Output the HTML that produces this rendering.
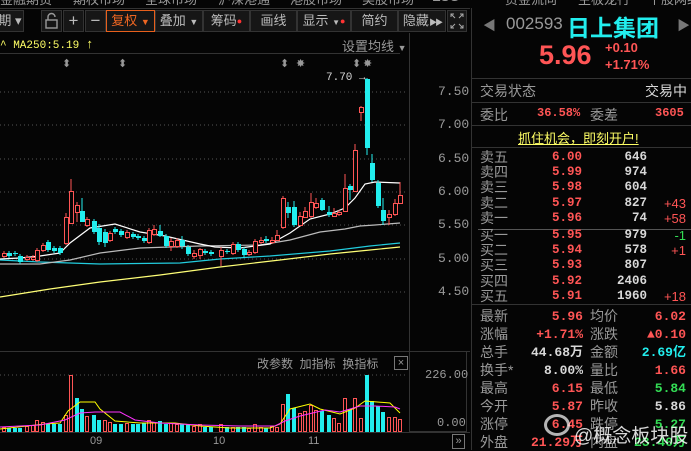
<!DOCTYPE html>
<html><head><meta charset="utf-8"><style>
*{margin:0;padding:0;box-sizing:border-box}
body{width:691px;height:450px;background:#050505;overflow:hidden;position:relative;font-family:"Liberation Sans","Noto Sans CJK SC",sans-serif;color:#ccc}
.a{position:absolute;white-space:nowrap}
.btn{position:absolute;top:10px;height:22px;background:#161616;border:1px solid #333;color:#bbb;font-size:13px;line-height:20px;text-align:center;white-space:nowrap;overflow:hidden}
.r{color:#ff5555}.g{color:#33dd55}.c{color:#22eeee}.w{color:#d8d8d8}.gr{color:#999}.y{color:#ffff66}
.mono{font-family:"Liberation Mono","Noto Sans CJK SC",monospace;font-weight:bold}
</style></head><body>
<div class="a gr" style="top:-11px;left:0;font-size:13px">
<span style="position:absolute;left:0">金融期货</span><span style="position:absolute;left:73px">期权市场</span><span style="position:absolute;left:145px">全球市场</span><span style="position:absolute;left:218px">沪深港通</span><span style="position:absolute;left:290px">港股市场</span><span style="position:absolute;left:362px">美股市场</span><span style="position:absolute;left:432px">ESG</span><span style="position:absolute;left:505px">资金流向</span><span style="position:absolute;left:578px">主板龙行</span><span style="position:absolute;left:648px">个股网络</span></div>
<div class="a" style="top:8px;left:0;width:470px;height:1px;background:#333"></div>
<div class="btn" style="left:-4px;width:28px">期 ▾</div>
<div class="btn" style="left:41px;width:21px">
<svg width="19" height="20" viewBox="0 0 19 20"><rect x="4" y="9" width="11" height="8" fill="none" stroke="#999" stroke-width="1.4"/><path d="M6 9V6a3.5 3.5 0 0 1 7 0" fill="none" stroke="#999" stroke-width="1.4"/></svg></div>
<div class="btn" style="left:63px;width:21px;font-size:17px">+</div>
<div class="btn" style="left:85px;width:21px;font-size:17px">−</div>
<div class="btn" style="left:106px;width:49px;border-color:#e8601c;color:#ee6622">复权 <span style="font-size:9px">▼</span></div>
<div class="btn" style="left:155px;width:48px">叠加 <span style="font-size:9px">▼</span></div>
<div class="btn" style="left:203px;width:47px">筹码<span style="color:#f33;font-size:9px;vertical-align:top">●</span></div>
<div class="btn" style="left:250px;width:47px">画线</div>
<div class="btn" style="left:297px;width:54px">显示 <span style="font-size:8px">▼</span><span style="color:#f33;font-size:9px;vertical-align:top">●</span></div>
<div class="btn" style="left:351px;width:47px">简约</div>
<div class="btn" style="left:398px;width:48px">隐藏<span style="font-size:8px;letter-spacing:-2px"> ▶▶</span></div>
<div class="btn" style="left:447px;width:20px"><svg width="18" height="20" viewBox="0 0 18 20"><path d="M3 6V3h3M12 3h3v3M15 14v3h-3M6 17H3v-3M3 3l4 4M15 3l-4 4M15 17l-4-4M3 17l4-4" fill="none" stroke="#aaa" stroke-width="1"/></svg></div>
<div class="a y" style="left:0;top:37px;font-size:11px;font-family:'Liberation Mono',monospace">^ MA250:5.19 <span style="font-size:13px">↑</span></div>
<div class="a gr" style="left:342px;top:36px;font-size:13px">设置均线 <span style="font-size:9px">▼</span></div>
<div class="a" style="left:0;top:53px;width:400px;height:1px;background:#333"></div>
<div class="a" style="left:409px;top:33px;width:1px;height:400px;background:#333"></div>
<div class="a" style="left:0;top:351px;width:470px;height:1px;background:#333"></div>
<div class="a" style="left:409px;top:352px;width:58px;height:80px;border:1px solid #333;border-top:none"></div>
<div class="a" style="left:0;top:432px;width:470px;height:1px;background:#333"></div>
<div class="a gr" style="left:438px;top:85px;font-size:13px;font-family:'Liberation Mono',monospace;line-height:14px">7.50</div>
<div class="a gr" style="left:438px;top:118px;font-size:13px;font-family:'Liberation Mono',monospace;line-height:14px">7.00</div>
<div class="a gr" style="left:438px;top:152px;font-size:13px;font-family:'Liberation Mono',monospace;line-height:14px">6.50</div>
<div class="a gr" style="left:438px;top:185px;font-size:13px;font-family:'Liberation Mono',monospace;line-height:14px">6.00</div>
<div class="a gr" style="left:438px;top:218px;font-size:13px;font-family:'Liberation Mono',monospace;line-height:14px">5.50</div>
<div class="a gr" style="left:438px;top:252px;font-size:13px;font-family:'Liberation Mono',monospace;line-height:14px">5.00</div>
<div class="a gr" style="left:438px;top:285px;font-size:13px;font-family:'Liberation Mono',monospace;line-height:14px">4.50</div>
<div class="a gr" style="left:425px;top:368px;font-size:12px;font-family:'Liberation Mono',monospace">226.00</div>
<div class="a gr" style="left:437px;top:416px;font-size:12px;font-family:'Liberation Mono',monospace">0.00</div>
<div class="a gr" style="left:90px;top:435px;font-size:11px">09</div>
<div class="a gr" style="left:213px;top:435px;font-size:11px">10</div>
<div class="a gr" style="left:308px;top:435px;font-size:11px">11</div>
<div class="a gr" style="left:452px;top:434px;width:13px;height:15px;border:1px solid #777;font-size:11px;line-height:13px;text-align:center">»</div>
<div class="a gr" style="left:257px;top:355px;font-size:12px">改参数 &nbsp;加指标 &nbsp;换指标</div>
<div class="a gr" style="left:394px;top:356px;width:14px;height:14px;border:1px solid #777;font-size:11px;line-height:12px;text-align:center">×</div>
<div class="a gr" style="left:62px;top:57px;font-size:11px">⬍</div>
<div class="a gr" style="left:118px;top:57px;font-size:11px">⬍</div>
<div class="a gr" style="left:280px;top:57px;font-size:11px">⬍</div>
<div class="a gr" style="left:296px;top:57px;font-size:11px">✸</div>
<div class="a gr" style="left:352px;top:57px;font-size:11px">⬍</div>
<div class="a gr" style="left:363px;top:57px;font-size:11px">✸</div>
<div class="a w" style="left:326px;top:72px;font-size:11px;font-family:'Liberation Mono',monospace">7.70 →</div>
<svg class="a" style="left:0;top:0" width="410" height="450">
<g stroke="#555" stroke-dasharray="1,3" stroke-width="1">
<line x1="0" y1="92" x2="408" y2="92"/><line x1="0" y1="125" x2="408" y2="125"/><line x1="0" y1="159" x2="408" y2="159"/><line x1="0" y1="192" x2="408" y2="192"/><line x1="0" y1="225" x2="408" y2="225"/><line x1="0" y1="259" x2="408" y2="259"/><line x1="0" y1="292" x2="408" y2="292"/><line x1="0" y1="375" x2="408" y2="375"/>
</g>
<g fill="none" stroke-width="1.2">
<polyline stroke="#ffff77" points="0,297 50,289 100,282 160,275 220,267 280,260 330,254 370,250 400,247"/>
<polyline stroke="#22ccdd" points="0,260 40,262 100,264 180,263 220,259 270,256 330,251 370,246 400,243"/>
<polyline stroke="#bbbbbb" points="0,264 40,264 70,260 100,253 140,248 200,246 260,245 290,240 320,232 345,229 360,226 375,225 400,223"/>
<polyline stroke="#ffffff" points="0,259 20,258 40,256 60,253 70,243 90,228 115,224 140,232 165,236 200,244 215,247 240,248 270,244 290,233 310,219 330,214 345,208 355,198 365,184 375,182 400,183"/>
</g>
<g id="k"></g>
<g id="v"></g>
<g fill="none" stroke-width="1">
<polyline stroke="#ffff00" points="0,429 45,424 60,423 68,411 80,402 95,402 100,409 115,421 140,423 175,423 200,426 230,428 270,428 280,424 290,409 310,404 320,409 340,414 355,408 365,401 390,403 400,413"/>
<polyline stroke="#ff33ff" points="0,427 40,425 65,420 80,413 95,412 120,412 135,420 160,423 200,425 240,426 275,426 285,421 300,416 325,410 340,412 360,406 375,406 395,407 400,409"/>
</g>
</svg>
<div class="a" style="left:471px;top:8px;width:1px;height:442px;background:#333"></div>
<div class="a" style="left:483px;top:15px;font-size:13px;color:#777">◀</div>
<div class="a" style="left:677px;top:15px;font-size:13px;color:#777">▶</div>
<div class="a gr" style="left:506px;top:14px;font-size:17px">002593</div>
<div class="a c" style="left:567px;top:9px;font-size:23px;font-weight:bold">日上集团</div>
<div class="a r" style="left:539px;top:40px;font-size:27px;font-weight:bold">5.96</div>
<div class="a r" style="left:605px;top:40px;font-size:13px;font-weight:bold">+0.10</div>
<div class="a r" style="left:605px;top:57px;font-size:13px;font-weight:bold">+1.71%</div>
<div class="a" style="left:472px;top:78px;width:219px;height:1px;background:#333"></div>
<div class="a gr" style="left:480px;top:81px;font-size:14px">交易状态</div>
<div class="a w" style="left:645px;top:81px;font-size:14px">交易中</div>
<div class="a" style="left:472px;top:102px;width:219px;height:1px;background:#333"></div>
<div class="a gr" style="left:480px;top:105px;font-size:14px">委比</div>
<div class="a r mono" style="left:537px;top:106px;font-size:12px">36.58%</div>
<div class="a gr" style="left:590px;top:105px;font-size:14px">委差</div>
<div class="a r mono" style="left:655px;top:106px;font-size:12px">3605</div>
<div class="a" style="left:472px;top:125px;width:219px;height:1px;background:#333"></div>
<div class="a y" style="left:518px;top:128px;font-size:13px;text-decoration:underline">抓住机会，即刻开户!</div>
<div class="a" style="left:472px;top:147px;width:219px;height:1px;background:#333"></div>
<div class="a" style="left:478px;top:229px;width:213px;height:1px;background:#555"></div>
<div class="a" style="left:472px;top:304px;width:219px;height:1px;background:#333"></div>
<div id="ob"></div>
<div class="a" style="left:544px;top:414px;width:26px;height:22px;border-radius:50%;border:3px solid rgba(255,255,255,.7)"></div>
<div class="a" style="left:574px;top:421px;font-size:19px;color:rgba(255,255,255,.85)">@概念板块股</div>
<script>
var K=[[4,253,256,'r'],[9,253,256,'c'],[15,253,254,'c'],[20,256,262,'c'],[27,257,259,'r'],[33,257,259,'r'],[37,250,260,'r'],[43,245,250,'r'],[48,242,250,'c'],[54,248,251,'c'],[60,248,253,'c'],[66,217,243,'r',213,245],[71,191,223,'r',179,223],[77,205,212,'r',202,222],[82,211,222,'c',198,222],[87,219,225,'r'],[94,221,232,'c'],[99,228,242,'c',224,245],[105,232,243,'c',229,247],[110,233,240,'r'],[115,229,232,'c'],[121,231,235,'c'],[127,232,237,'r'],[133,234,237,'c'],[138,236,238,'c'],[144,238,241,'c'],[149,230,242,'r'],[154,229,234,'r',225,236],[160,231,236,'c',225,237],[166,236,246,'c'],[171,241,246,'r',238,251],[177,240,246,'r'],[182,240,246,'c',236,249],[188,247,254,'c'],[194,253,256,'r',250,259],[200,249,255,'r',248,259],[205,251,253,'c'],[211,252,254,'c',250,256],[221,250,256,'r',247,266],[227,251,252,'c'],[233,244,253,'r'],[238,244,250,'c'],[244,249,255,'c',247,258],[249,252,254,'r'],[255,241,252,'r'],[261,240,242,'r',237,244],[266,239,241,'c',236,243],[272,240,242,'r',237,244],[277,235,240,'r',230,241],[283,198,227,'r'],[288,207,213,'c',202,218],[294,207,225,'c',201,227],[300,216,225,'r',212,226],[305,211,217,'r',207,218],[311,202,216,'r',193,218],[316,203,207,'r',198,209],[322,200,210,'c',198,211],[329,212,215,'c',206,217],[334,213,216,'r',208,217],[339,212,214,'r'],[345,188,211,'r',174,212],[350,186,190,'c',184,200],[355,150,191,'r',144,191],[361,107,112,'r',106,121],[367,79,148,'c',78,155],[372,163,180,'c',154,182],[378,183,206,'c',180,208],[383,210,221,'c',198,225],[389,214,217,'r',210,225],[395,203,214,'r',199,216],[400,195,203,'r',182,204]];
var s='',col={r:'#ff5555',c:'#22eeee'};
K.forEach(function(k){var x=k[0],o=k[1],c=k[2],h=k[4]||o-2,l=k[5]||c+2,cl=col[k[3]];
s+='<line x1="'+x+'" y1="'+h+'" x2="'+x+'" y2="'+l+'" stroke="'+cl+'"/>';
if(k[3]=='r')s+='<rect x="'+(x-2)+'.5" y="'+o+'.5" width="4" height="'+Math.max(c-o,1)+'" fill="#050505" stroke="'+cl+'"/>';
else s+='<rect x="'+(x-2)+'" y="'+o+'" width="5" height="'+Math.max(c-o,1)+'" fill="'+cl+'"/>';});
document.getElementById('k').innerHTML=s;
var V=[[4,427,'r'],[9,428,'c'],[15,428,'c'],[20,428,'c'],[27,426,'r'],[33,425,'r'],[37,420,'r'],[43,422,'r'],[48,424,'c'],[54,424,'c'],[60,424,'c'],[66,415,'r'],[71,375,'r'],[77,398,'c'],[82,409,'c'],[87,416,'r'],[94,415,'c'],[99,420,'c'],[105,420,'r'],[110,422,'r'],[115,424,'c'],[121,424,'c'],[127,423,'r'],[133,424,'c'],[138,424,'c'],[144,423,'c'],[149,420,'r'],[154,422,'r'],[160,421,'c'],[166,424,'c'],[171,423,'r'],[177,424,'r'],[182,424,'c'],[188,424,'c'],[194,426,'r'],[200,424,'r'],[205,427,'c'],[211,427,'c'],[221,424,'r'],[227,427,'c'],[233,427,'r'],[238,427,'c'],[244,427,'c'],[249,428,'r'],[255,424,'r'],[261,427,'r'],[266,428,'c'],[272,426,'r'],[277,427,'r'],[283,404,'r'],[288,394,'c'],[294,408,'c'],[300,413,'r'],[305,411,'r'],[311,405,'r'],[316,410,'r'],[322,411,'c'],[329,415,'c'],[334,418,'r'],[339,423,'r'],[345,398,'r'],[350,409,'c'],[355,398,'r'],[361,418,'r'],[367,375,'c'],[372,401,'c'],[378,406,'c'],[383,412,'c'],[389,417,'r'],[395,417,'r'],[400,419,'r']];
s='';V.forEach(function(v){var cl=col[v[2]];
if(v[2]=='r')s+='<rect x="'+(v[0]-2)+'.5" y="'+v[1]+'.5" width="3" height="'+(431-v[1])+'" fill="none" stroke="'+cl+'"/>';
else s+='<rect x="'+(v[0]-2)+'" y="'+v[1]+'" width="4" height="'+(432-v[1])+'" fill="'+cl+'"/>';});
document.getElementById('v').innerHTML=s;
var ob=[['卖五','6.00','646',''],['卖四','5.99','974',''],['卖三','5.98','604',''],['卖二','5.97','827','+43'],['卖一','5.96','74','+58'],['买一','5.95','979','-1'],['买二','5.94','578','+1'],['买三','5.93','807',''],['买四','5.92','2406',''],['买五','5.91','1960','+18']];
s='';ob.forEach(function(o,i){var y=(i<5?150:228)+i%5*15.2;
s+='<div class="a gr" style="left:480px;top:'+y+'px;font-size:14px;line-height:15px">'+o[0]+'</div>';
s+='<div class="a r mono" style="right:109px;top:'+y+'px;font-size:12.5px;line-height:15px">'+o[1]+'</div>';
s+='<div class="a w mono" style="right:44px;top:'+y+'px;font-size:12.5px;line-height:15px">'+o[2]+'</div>';
if(o[3])s+='<div class="a '+(o[3][0]=='-'?'g':'r')+'" style="right:5px;top:'+y+'px;font-size:13px;line-height:15px">'+o[3]+'</div>';});
var bt=[['最新','5.96','r','均价','6.02','r'],['涨幅','+1.71%','r','涨跌','▲0.10','r'],['总手','44.68万','w','金额','2.69亿','c'],['换手*','8.00%','w','量比','1.66','r'],['最高','6.15','r','最低','5.84','g'],['今开','5.87','r','昨收','5.86','w'],['涨停','6.45','r','跌停','5.27','g'],['外盘','21.29万','r','内盘','23.40万','g']];
bt.forEach(function(b,i){var y=308+i*18;
s+='<div class="a gr" style="left:480px;top:'+y+'px;font-size:14px;line-height:17px">'+b[0]+'</div>';
s+='<div class="a '+b[2]+' mono" style="right:108px;top:'+y+'px;font-size:13px;line-height:17px">'+b[1]+'</div>';
s+='<div class="a gr" style="left:590px;top:'+y+'px;font-size:14px;line-height:17px">'+b[3]+'</div>';
s+='<div class="a '+b[5]+' mono" style="right:5px;top:'+y+'px;font-size:13px;line-height:17px">'+b[4]+'</div>';});
document.getElementById('ob').innerHTML=s;
</script>
</body></html>
